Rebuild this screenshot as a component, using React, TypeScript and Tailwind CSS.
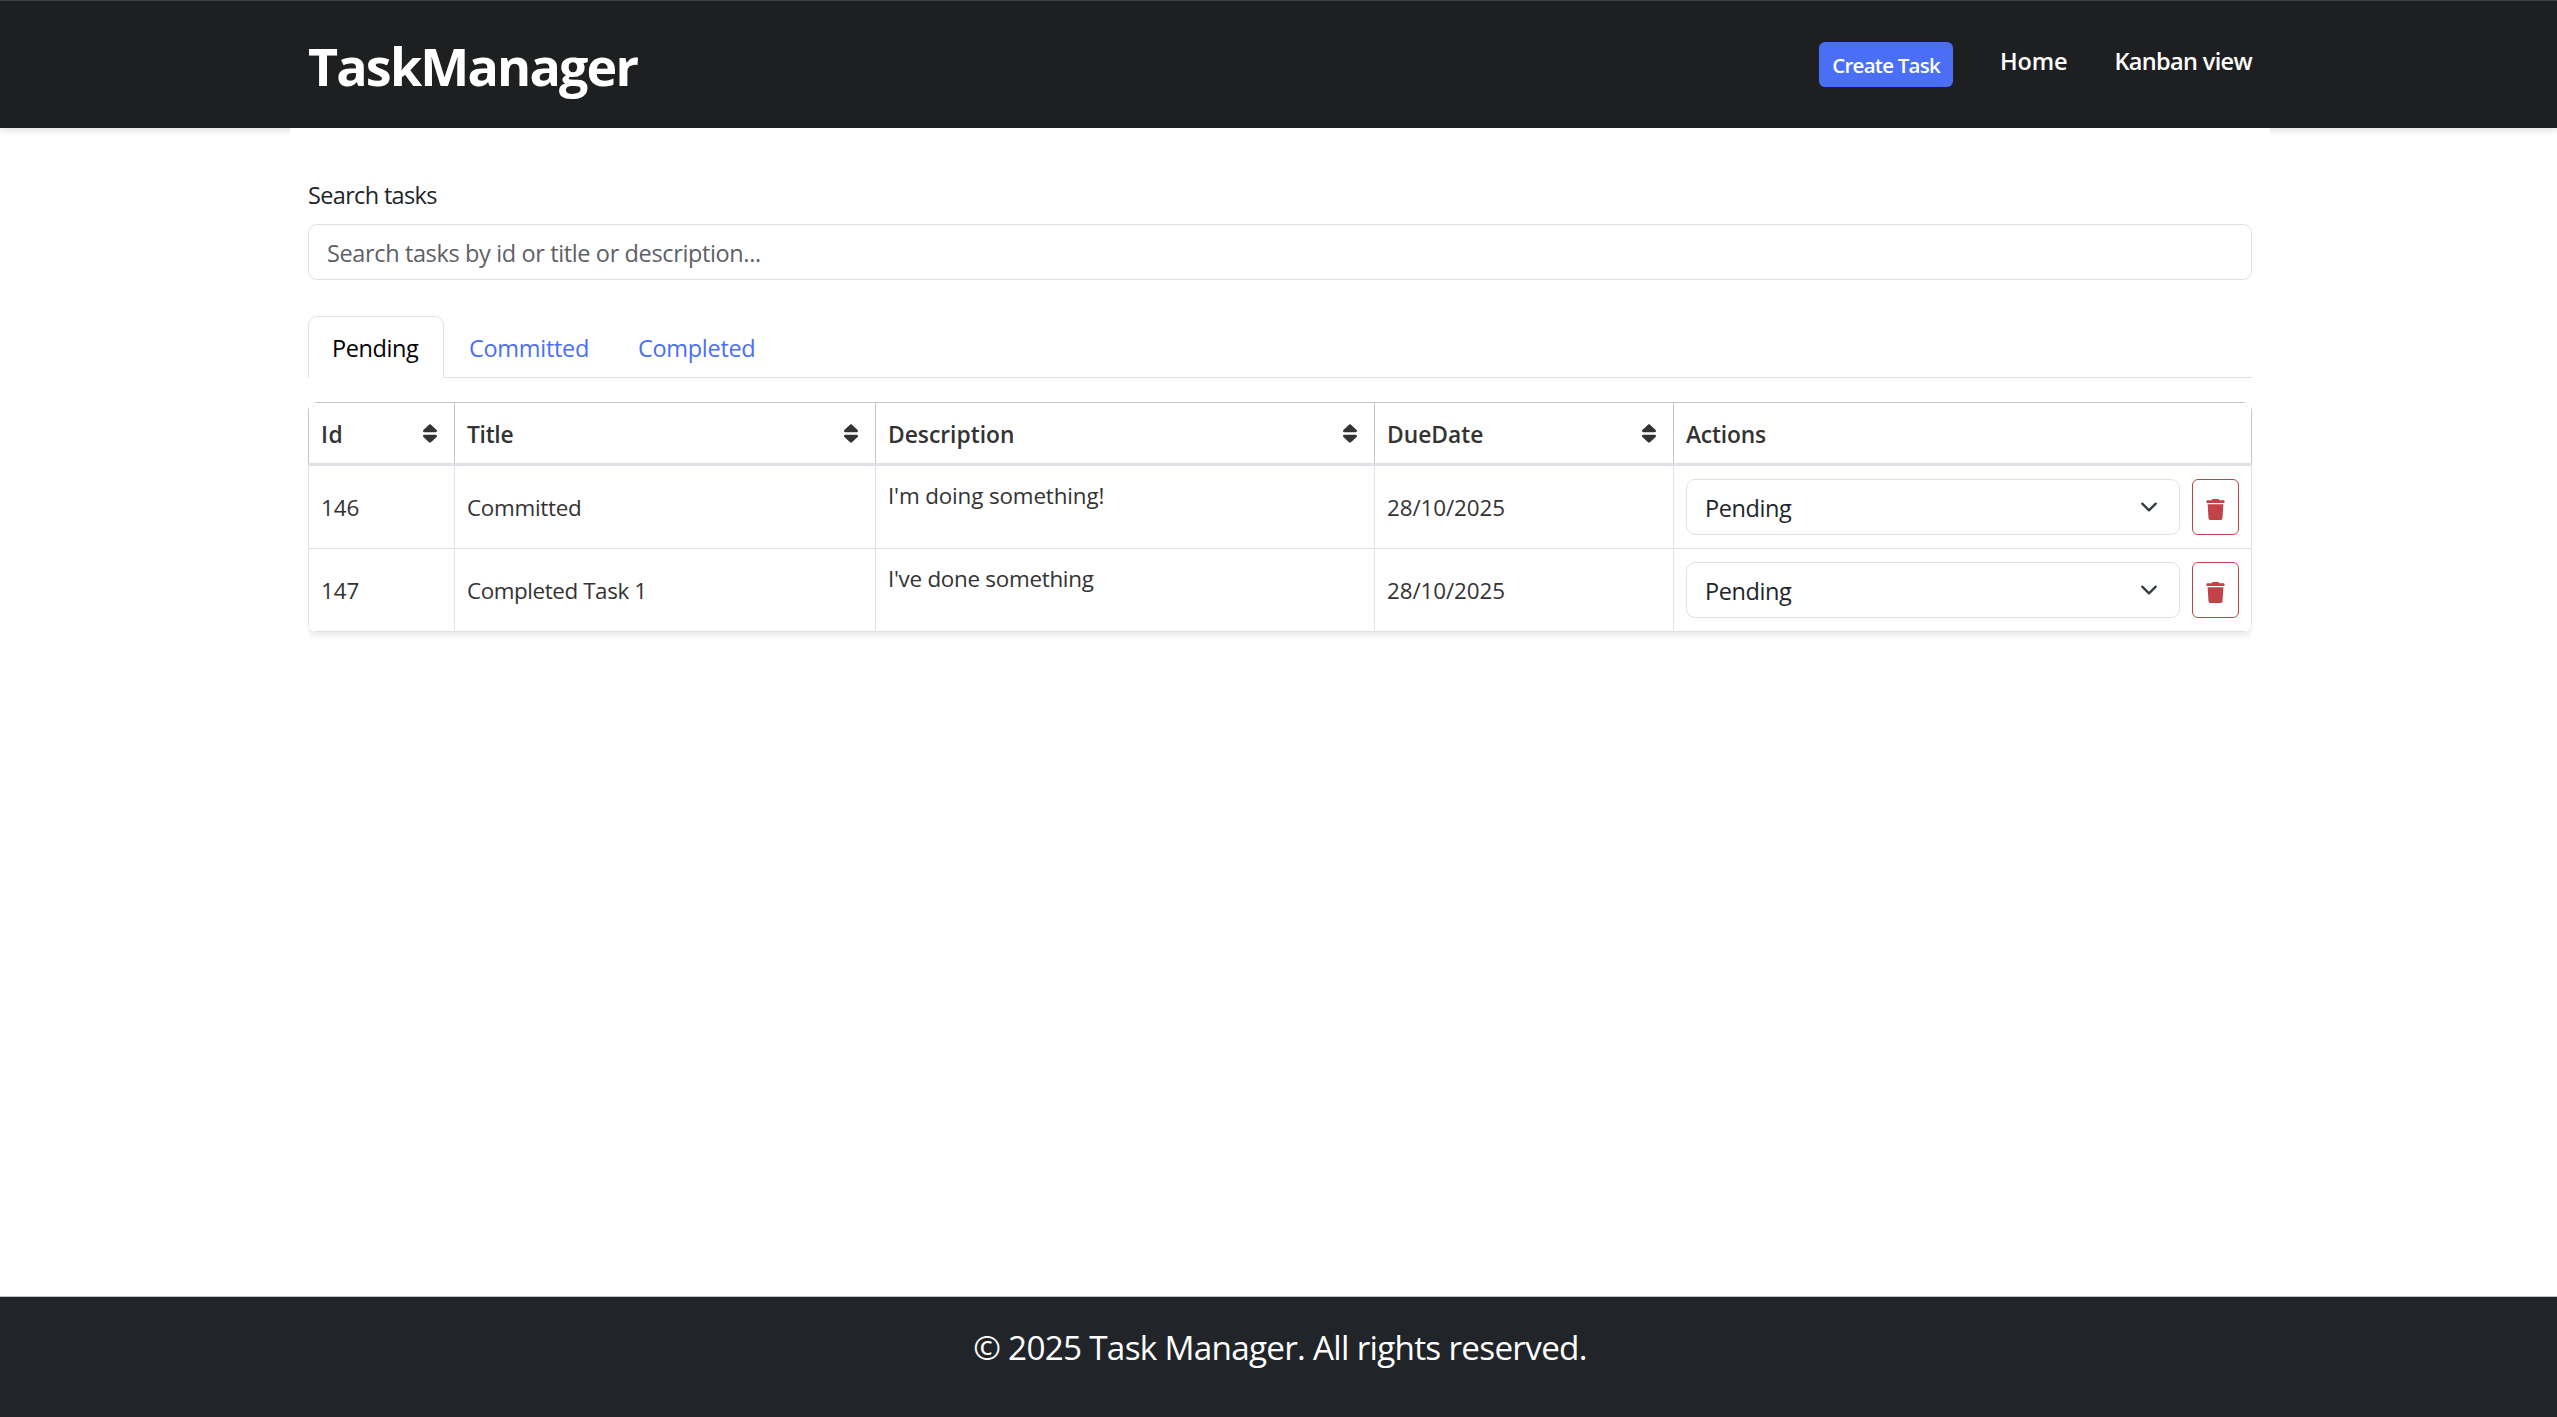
import type { ReactNode } from "react";
import { FaSort, FaTrash } from "react-icons/fa6";

const tasks = [
  { id: "146", title: "Committed", description: "I'm doing something!", due: "28/10/2025", titleTracking: "tracking-[-0.28px]", descTracking: "tracking-[-0.13px]" },
  { id: "147", title: "Completed Task 1", description: "I've done something", due: "28/10/2025", titleTracking: "tracking-[-0.41px]", descTracking: "tracking-[-0.27px]" },
];

const columns = [
  { label: "Id", tracking: "tracking-[0.5px]", sortable: true },
  { label: "Title", tracking: "tracking-[-0.3px]", sortable: true },
  { label: "Description", tracking: "tracking-normal", sortable: true },
  { label: "DueDate", tracking: "tracking-normal", sortable: true },
  { label: "Actions", tracking: "tracking-[-0.2px]", sortable: false },
];

const grid = "grid grid-cols-[147px_421px_499px_299px_578px]";

function Header() {
  return (
    <header className="h-32 shrink-0 border-t border-[#3f4244] bg-[#1e1f21] pl-[3px] shadow-[0_3px_6px_rgba(0,0,0,0.11)]">
      <div className="mx-auto flex w-[1944px] items-start justify-between text-white">
        <h1 className="mt-[29px] text-[52px] leading-[72px] font-bold tracking-[-1.83px]">TaskManager</h1>
        <nav className="mt-[41px] flex items-start text-[23.5px] leading-[38px] font-semibold">
          <button className="mr-[47px] flex h-[45px] w-[134px] items-center justify-center rounded-md bg-[#4a6ff6] text-[20.5px] leading-[30px] font-semibold tracking-[-0.75px] whitespace-nowrap">
            Create Task
          </button>
          <a className="mr-[47px] tracking-[-0.15px]">Home</a>
          <a className="tracking-[-0.65px]">Kanban view</a>
        </nav>
      </div>
    </header>
  );
}

function Tabs() {
  return (
    <div className="mt-9 flex h-[62px] leading-[62px]">
      <div className="w-[136px] rounded-t-[9px] border border-b-0 border-[#dee2e6] pl-[23px] tracking-[-0.43px] text-black">Pending</div>
      <div className="flex flex-1 border-b border-[#dee2e6] pt-px text-[#4a6ff6]">
        <a className="ml-[25px] w-[169px] tracking-[-0.3px]">Committed</a>
        <a className="tracking-[-0.3px]">Completed</a>
      </div>
    </div>
  );
}

function Cell({ children, className = "" }: { children: ReactNode; className?: string }) {
  return (
    <div className={`flex items-center border-r border-b border-[#dee2e6] px-3 first:border-l ${className}`}>{children}</div>
  );
}

function StatusSelect() {
  return (
    <div className="flex h-14 flex-1 items-center justify-between rounded-[9px] border border-[#dee2e6] pr-[21px] pl-[18px] text-[23.5px] tracking-[-0.43px] text-[#212529]">
      <span className="pt-[3px]">Pending</span>
      <svg viewBox="0 0 16 16" className="size-[18px]" fill="none" stroke="#343a40" strokeWidth="2" strokeLinecap="round" strokeLinejoin="round">
        <path d="m2 5 6 6 6-6" />
      </svg>
    </div>
  );
}

function TaskTable() {
  return (
    <div className="mt-6 overflow-hidden pb-6">
      <div className="rounded-[9px] shadow-[0_3px_6px_rgba(0,0,0,0.1)]">
        <div className="overflow-hidden rounded-[9px] bg-white text-[22.4px] text-[#333333]">
          <div className={`${grid} h-[61px] border-t border-[#c6c7c8] text-[22.8px] font-semibold`}>
            {columns.map((c) => (
              <div key={c.label} className="flex items-center justify-between border-r border-[#c6c7c8] pr-[17px] pl-3 first:border-l">
                <span className={`pt-1 ${c.tracking}`}>{c.label}</span>
                {c.sortable && <FaSort className="h-[21px] w-[14px]" preserveAspectRatio="none" />}
              </div>
            ))}
          </div>
          <div className="h-[3px] bg-[#dee2e6]" />
          {tasks.map((t) => (
            <div key={t.id} className={`${grid} h-[83px]`}>
              <Cell className="pt-0.5">{t.id}</Cell>
              <Cell className={`pt-0.5 ${t.titleTracking}`}>{t.title}</Cell>
              <Cell className={`pb-[23px] ${t.descTracking}`}>{t.description}</Cell>
              <Cell className="pt-0.5 tracking-[-0.1px]">{t.due}</Cell>
              <Cell className="gap-3">
                <StatusSelect />
                <button className="flex h-14 w-[47px] items-center justify-center rounded-md border border-[#c14249] pt-1 text-[#c14249]">
                  <FaTrash className="size-[21px]" />
                </button>
              </Cell>
            </div>
          ))}
        </div>
      </div>
    </div>
  );
}

export default function App() {
  return (
    <div className="flex h-[1417px] flex-col bg-white font-['Open_Sans','Noto_Sans',sans-serif]">
      <Header />
      <div className="relative flex flex-1 justify-center pl-[3px]">
        <main className="w-[1980px] bg-white px-[18px] text-[23.5px] text-[#212529]">
          <label className="block pt-[49px] leading-9 tracking-[-0.66px]">Search tasks</label>
          <div className="mt-[11px] flex h-14 items-center rounded-[9px] border border-[#dee2e6] pt-1 pl-[18px] tracking-[-0.37px] text-[#5d6166]">
            Search tasks by id or title or description...
          </div>
          <Tabs />
          <TaskTable />
        </main>
      </div>
      <footer className="h-[121px] shrink-0 border-t border-[#bfc1c3] bg-[#212529] pt-[25px] pl-[3px] text-center text-[33.3px] leading-[50px] tracking-[-0.73px] text-white">
        © 2025 Task Manager. All rights reserved.
      </footer>
    </div>
  );
}
